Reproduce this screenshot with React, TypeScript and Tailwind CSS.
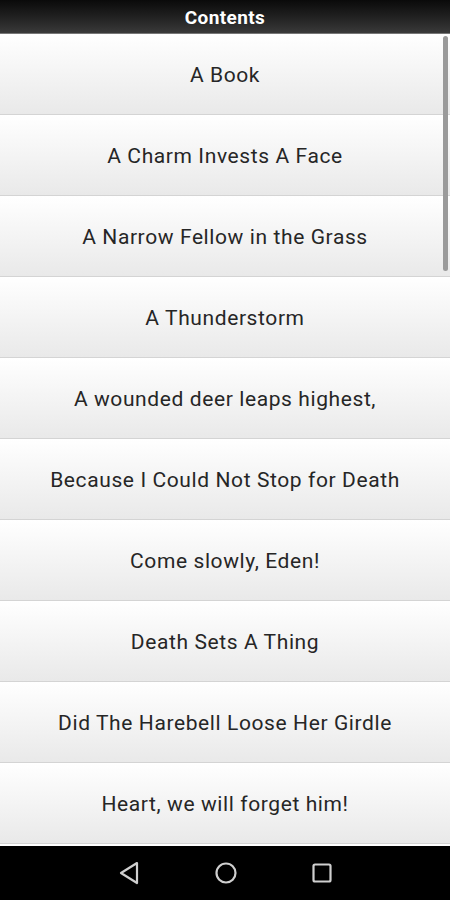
const titles = [
  "A Book",
  "A Charm Invests A Face",
  "A Narrow Fellow in the Grass",
  "A Thunderstorm",
  "A wounded deer leaps highest,",
  "Because I Could Not Stop for Death",
  "Come slowly, Eden!",
  "Death Sets A Thing",
  "Did The Harebell Loose Her Girdle",
  "Heart, we will forget him!",
];

function NavBar() {
  return (
    <div className="h-[54px] bg-black flex items-center justify-center gap-[74px]">
      <svg width="22" height="24" viewBox="0 0 22 24" fill="none">
        <path d="M19 2 L3 12 L19 22 Z" stroke="#cfcfcf" strokeWidth="2.2" strokeLinejoin="round" />
      </svg>
      <svg width="24" height="24" viewBox="0 0 24 24" fill="none">
        <circle cx="12" cy="12" r="9.5" stroke="#cfcfcf" strokeWidth="2.2" />
      </svg>
      <svg width="20" height="20" viewBox="0 0 20 20" fill="none">
        <rect x="1.5" y="1.5" width="17" height="17" rx="1.5" stroke="#cfcfcf" strokeWidth="2.2" />
      </svg>
    </div>
  );
}

export default function App() {
  return (
    <div className="w-[450px] h-[900px] flex flex-col overflow-hidden bg-white font-['Roboto',sans-serif]">
      <header className="h-[34px] shrink-0 pt-[3px] bg-gradient-to-b from-[#0a0a0a] to-[#3a3a3a] flex items-center justify-center border-b border-[#777]">
        <h1 className="text-white text-[19px] font-bold tracking-[0.4px]">Contents</h1>
      </header>
      <div className="relative flex-1 overflow-hidden">
        <ul>
          {titles.map((t) => (
            <li
              key={t}
              className="h-[81px] pt-[3px] flex items-center justify-center bg-gradient-to-b from-[#ffffff] to-[#e9e9e9] border-b border-[#d4d4d4] text-[21px] tracking-[0.6px] text-[#262626]"
            >
              {t}
            </li>
          ))}
        </ul>
        <div className="absolute right-[2px] top-[2px] w-[5px] h-[235px] rounded-full bg-[#9a9a9a]" />
      </div>
      <NavBar />
    </div>
  );
}
